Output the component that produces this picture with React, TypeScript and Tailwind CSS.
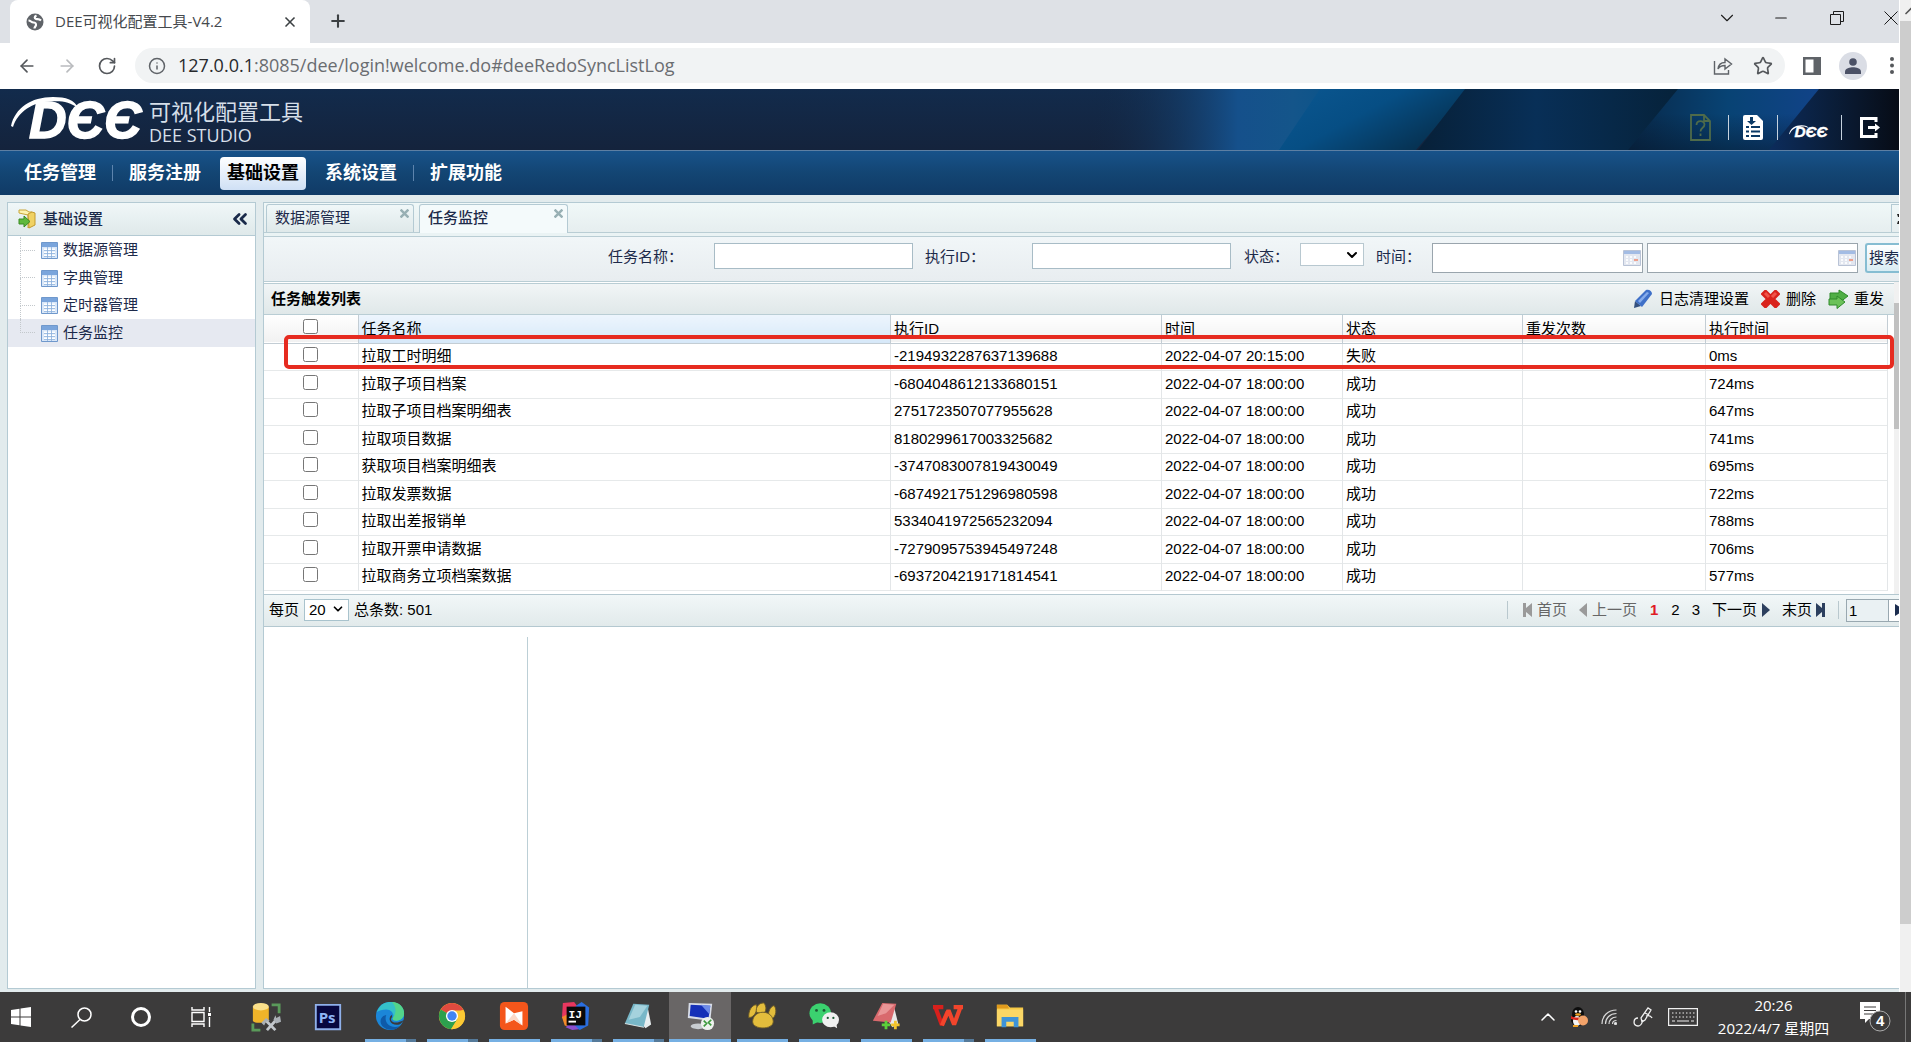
import React from "react";
import {
  ArrowLeft,
  ArrowRight,
  RotateCw,
  Info,
  Star,
  X,
  Plus,
  ChevronDown,
  ChevronUp,
  ChevronsLeft,
  Minus,
} from "lucide-react";

const NAV = ["任务管理", "服务注册", "基础设置", "系统设置", "扩展功能"];
const TREE = ["数据源管理", "字典管理", "定时器管理", "任务监控"];

const ROWS = [
  ["拉取工时明细", "-2194932287637139688", "2022-04-07 20:15:00", "失败", "0ms"],
  ["拉取子项目档案", "-6804048612133680151", "2022-04-07 18:00:00", "成功", "724ms"],
  ["拉取子项目档案明细表", "2751723507077955628", "2022-04-07 18:00:00", "成功", "647ms"],
  ["拉取项目数据", "8180299617003325682", "2022-04-07 18:00:00", "成功", "741ms"],
  ["获取项目档案明细表", "-3747083007819430049", "2022-04-07 18:00:00", "成功", "695ms"],
  ["拉取发票数据", "-6874921751296980598", "2022-04-07 18:00:00", "成功", "722ms"],
  ["拉取出差报销单", "5334041972565232094", "2022-04-07 18:00:00", "成功", "788ms"],
  ["拉取开票申请数据", "-7279095753945497248", "2022-04-07 18:00:00", "成功", "706ms"],
  ["拉取商务立项档案数据", "-6937204219171814541", "2022-04-07 18:00:00", "成功", "577ms"],
];

const UI = "font-['Liberation_Sans','Noto_Sans_CJK_SC',sans-serif]";
const SEGOE = "font-['Open_Sans','Noto_Sans_CJK_SC',sans-serif]";

/* ---------- browser chrome ---------- */

function Globe() {
  return (
    <svg viewBox="0 0 18 18" className="h-[18px] w-[18px]">
      <circle cx="9" cy="9" r="8.500" fill="#5f6368" />
      <path
        d="M2.500 7.500C5 7.500 5 9.500 7.500 9.500s2.500 1 2.500 2.500-1.500 1.500-1.500 3.500M10.500 2.500C8 3.500 8.500 5.500 10 6s3-.5 5 1.500"
        fill="none"
        stroke="#fff"
        strokeWidth="2.200"
      />
    </svg>
  );
}

function TabStrip() {
  return (
    <div className={`flex h-[43px] shrink-0 items-end bg-[#dee1e6] pl-[10px] ${SEGOE}`}>
      <div className="flex h-[43px] w-[300px] items-center rounded-t-lg bg-white pr-3 pl-4">
        <Globe />
        <span className="ml-[11px] grow text-[15px] whitespace-nowrap text-[#45494d]">
          DEE可视化配置工具-V4.2
        </span>
        <button aria-label="关闭标签页">
          <X className="h-4 w-4 text-[#3c4043]" strokeWidth={2.5} />
        </button>
      </div>
      <button aria-label="新标签页" className="mb-3 ml-[18px]">
        <Plus className="h-5 w-5 text-[#3c4043]" strokeWidth={2.5} />
      </button>
      <div className="grow" />
      <div className="flex h-[36px] items-center gap-10 self-start text-[#1c1c1c]">
        <button aria-label="搜索标签页">
          <ChevronDown className="h-[22px] w-[22px]" strokeWidth={1.2} />
        </button>
        <button aria-label="最小化" className="-ml-[6px]">
          <Minus className="h-[18px] w-[18px]" strokeWidth={1.6} />
        </button>
        <button aria-label="还原">
          <svg viewBox="0 0 14 14" className="h-[14px] w-[14px]" fill="none" stroke="currentColor">
            <path d="M.5 3.500h10v10h-10zM3.500 3.500v-3h10v10h-3" />
          </svg>
        </button>
        <button aria-label="关闭" className="mr-[1px]">
          <svg viewBox="0 0 14 14" className="h-[14px] w-[14px]" stroke="currentColor">
            <path d="M.5.5l13 13M13.500.5l-13 13" />
          </svg>
        </button>
      </div>
    </div>
  );
}

function Toolbar() {
  return (
    <div className={`flex h-[46px] shrink-0 items-center bg-white pb-[1px] pl-[17px] ${SEGOE}`}>
      <button aria-label="后退">
        <ArrowLeft className="h-5 w-5 text-[#55585c]" />
      </button>
      <button aria-label="前进" className="ml-5">
        <ArrowRight className="h-5 w-5 text-[#b9bbbe]" />
      </button>
      <button aria-label="刷新" className="ml-5">
        <RotateCw className="h-5 w-5 text-[#55585c]" />
      </button>
      <div className="ml-[18px] flex h-[35px] grow items-center rounded-full bg-[#f1f3f4] pr-3 pl-[13px]">
        <Info className="h-[18px] w-[18px] shrink-0 text-[#5f6368]" />
        <div className="ml-3 grow text-[18px] whitespace-nowrap text-[#6a6d71]">
          <span className="text-[#27292c]">127.0.0.1</span>:8085/dee/login!welcome.do#deeRedoSyncListLog
        </div>
        <button aria-label="分享">
          <svg viewBox="0 0 20 20" className="h-5 w-5" fill="none" stroke="#5f6368" strokeWidth="1.4">
            <path d="M1.500 5v13h14v-4M5 13c.5-4.500 3-6.500 7-6.500V3l6.500 5-6.500 5V9.500c-3 0-5.500.800-7 3.500z" />
          </svg>
        </button>
        <button aria-label="收藏" className="ml-5">
          <Star className="h-5 w-5 text-[#55585c]" />
        </button>
      </div>
      <button aria-label="侧边栏" className="ml-[18px]">
        <svg viewBox="0 0 18 18" className="h-[18px] w-[18px]">
          <path d="M0 0h18v18H0zM2.500 2.500v13h8v-13z" fill="#5f6368" fillRule="evenodd" />
        </svg>
      </button>
      <button
        aria-label="用户"
        className="ml-[18px] flex h-7 w-7 items-center justify-center rounded-full bg-[#dadde5]"
      >
        <svg viewBox="0 0 16 16" className="h-4 w-4" fill="#4b5166">
          <circle cx="8" cy="4" r="3.800" />
          <path d="M0 16v-2.500C0 10.500 5 9.300 8 9.300s8 1.200 8 4.200V16z" />
        </svg>
      </button>
      <button aria-label="菜单" className="mr-[5px] ml-[23px]">
        <svg viewBox="0 0 4 17" className="h-[17px] w-1" fill="#55585c">
          <circle cx="2" cy="2" r="2" />
          <circle cx="2" cy="8.500" r="2" />
          <circle cx="2" cy="15" r="2" />
        </svg>
      </button>
    </div>
  );
}

/* ---------- application header ---------- */

function DeeLogo({ className }: { className: string }) {
  return (
    <svg viewBox="0 0 138 61" className={className} fill="#fff">
      <path d="M0 37C4 19 20 8 42 8c13 0 22 3 25 11-8-6-17-7.500-27-6.500C21 13 7 23 2 38z" />
      <text
        x="18"
        y="49"
        fontSize="52"
        fontFamily="'Liberation Sans', Arial, sans-serif"
        fontStyle="italic"
        fontWeight="700"
        stroke="#fff"
        strokeWidth="1.500"
      >
        DЄЄ
      </text>
    </svg>
  );
}

function HeaderArt() {
  return (
    <svg
      viewBox="0 0 860 61"
      preserveAspectRatio="none"
      className="absolute top-0 right-0 h-full w-[860px]"
    >
      <defs>
        <linearGradient id="a">
          <stop offset="0" stopColor="#132743" stopOpacity="0" />
          <stop offset="0.620" stopColor="#15508b" />
          <stop offset="0.850" stopColor="#14558a" />
          <stop offset="1" stopColor="#0c548a" />
        </linearGradient>
        <linearGradient id="b" x1="0" y1="0" x2="1" y2="0.600">
          <stop offset="0" stopColor="#0b5791" />
          <stop offset="0.500" stopColor="#064e84" />
          <stop offset="1" stopColor="#06304f" />
        </linearGradient>
        <linearGradient id="c">
          <stop offset="0" stopColor="#072038" />
          <stop offset="0.450" stopColor="#082f57" />
          <stop offset="1" stopColor="#06223a" />
        </linearGradient>
        <linearGradient id="d">
          <stop offset="0" stopColor="#08294a" />
          <stop offset="0.500" stopColor="#084374" />
          <stop offset="1" stopColor="#12438a" />
        </linearGradient>
        <linearGradient id="e">
          <stop offset="0" stopColor="#0c2c5c" />
          <stop offset="0.500" stopColor="#0a1d38" />
          <stop offset="1" stopColor="#070c16" />
        </linearGradient>
        <linearGradient id="f" x1="0" y1="0" x2="0" y2="1">
          <stop offset="0.400" stopColor="#06162a" stopOpacity="0" />
          <stop offset="1" stopColor="#06162a" stopOpacity="0.500" />
        </linearGradient>
      </defs>
      <path d="M50 0h240v61H50z" fill="url(#a)" />
      <path d="M281 0h148l-52 61H240z" fill="url(#b)" />
      <path d="M426 0h215l-50 61H379z" fill="url(#c)" />
      <path d="M639 0h150l-50 61H589z" fill="url(#d)" />
      <path d="M639 0h221v61H589z" fill="url(#f)" />
      <path d="M780 0h80v61H730z" fill="url(#e)" />
    </svg>
  );
}

function AppHeader() {
  return (
    <header className="relative flex h-[61px] shrink-0 items-start overflow-hidden bg-linear-to-b from-[#122b4c] to-[#14233c]">
      <HeaderArt />
      <DeeLogo className="relative ml-[11px] h-[61px] w-[138px]" />
      <div className={`relative mt-2 text-[#d6dfe9] ${SEGOE}`}>
        <div className="text-[22px] leading-7">可视化配置工具</div>
        <div className="text-[18px] leading-5">DEE STUDIO</div>
      </div>
      <div className="grow" />
      <div className="relative mt-[25px] mr-[19px] flex items-center">
        <button aria-label="帮助">
          <svg viewBox="0 0 21 27" className="h-[27px] w-[21px]" fill="none" stroke="#4f6b4a" strokeWidth="1.800">
            <path d="M1 1h13l6 6v19H1zM14 1v6h6" />
            <path d="M6.500 11c0-5 8-5 8-.5 0 3.500-4 3-4 7M10.500 19.500v2.500" />
          </svg>
        </button>
        <span className="ml-[17px] h-[25px] w-[1px] bg-[#c6d2de]" />
        <button aria-label="日志" className="ml-[14px]">
          <svg viewBox="0 0 20 25" className="h-[25px] w-5">
            <path d="M2 0h12l6 6v17a2 2 0 0 1-2 2H2a2 2 0 0 1-2-2V2a2 2 0 0 1 2-2z" fill="#fff" />
            <path d="M7 2h3v4h3l-4.500 4L4 6h3zM3 11h3v2H3zm5 0h9v2H8zM3 15.500h3v2H3zm5 0h9v2H8zM3 20h3v2H3zm5 0h9v2H8z" fill="#0b3a66" />
          </svg>
        </button>
        <span className="ml-[14px] h-[25px] w-[1px] bg-[#c6d2de]" />
        <DeeLogo className="mt-2 ml-[11px] h-[18px] w-[41px]" />
        <span className="ml-[11px] h-[25px] w-[1px] bg-[#c6d2de]" />
        <button aria-label="退出" className="ml-[18px]">
          <svg viewBox="0 0 20 21" className="h-[21px] w-5" fill="none" stroke="#fff" strokeWidth="3">
            <path d="M16 5V1.500H1.500v18H16V16" />
            <path d="M8 10.500h7" />
            <path d="M15 6.500l5 4-5 4z" fill="#fff" stroke="none" />
          </svg>
        </button>
      </div>
    </header>
  );
}

function NavBar() {
  return (
    <nav
      className={`flex h-[45px] shrink-0 items-center border-t border-[#5d7fa3] bg-linear-to-b from-[#17528a] via-[#134573] via-50% to-[#103a66] pl-4 text-[18px] font-bold text-white ${UI}`}
    >
      {NAV.map((n, i) => (
        <React.Fragment key={n}>
          <a
            href="#"
            className={
              i === 2
                ? "mx-1 rounded-[4px] bg-linear-to-b from-white to-[#cfe0f5] px-[7px] text-black leading-[33px]"
                : "px-2 leading-[33px]"
            }
          >
            {n}
          </a>
          {(i === 0 || i === 3) && <span className="mx-[8px] h-4 w-[1px] bg-[#5d84ad]" />}
          {(i === 1 || i === 2) && <span className="w-[7px]" />}
        </React.Fragment>
      ))}
    </nav>
  );
}

/* ---------- sidebar ---------- */

function TableIcon() {
  return (
    <svg viewBox="0 0 17 17" className="h-[17px] w-[17px] shrink-0">
      <path d="M.5.5h16v16H.5z" fill="#d9e7f8" stroke="#6f98cc" />
      <path d="M1 1h15v4H1z" fill="#7aa5dc" />
      <path d="M3 6.500h3v2H3zm4 0h3v2H7zm4 0h3v2h-3zM3 9.500h3v2H3zm4 0h3v2H7zm4 0h3v2h-3zM3 12.500h3v2H3zm4 0h3v2H7zm4 0h3v2h-3z" fill="#fff" />
      <path d="M3 8.500h11M3 11.500h11M3 14.500h11M6.500 5v11M10.500 5v11" stroke="#8db1dc" strokeWidth=".800" />
    </svg>
  );
}

function FolderIcon() {
  return (
    <svg viewBox="0 0 18 20" className="h-5 w-[18px]">
      <path d="M1 1h7l3 2h3v13l-4 3V6L1 4z" fill="#fdf3b0" stroke="#c9a63a" />
      <path d="M10 5l4-2 3 1v12l-6 3z" fill="#f0d264" stroke="#c29a2e" />
      <path d="M1 10h5V7l6 5.500-6 5.500v-3H1z" fill="#5fb83c" stroke="#3b8b22" />
    </svg>
  );
}

function Sidebar() {
  return (
    <aside className="flex w-[249px] shrink-0 flex-col border border-[#b4cad3] bg-white text-[15px] text-[#1d2a4a]">
      <div className="flex h-[33px] items-center border-b border-[#b4cad3] bg-linear-to-b from-[#f0f7f8] to-[#dfe9ea] pr-1 pl-[10px] text-[#1a2a4a]">
        <FolderIcon />
        <span className="ml-[7px] grow font-medium">基础设置</span>
        <button aria-label="折叠">
          <ChevronsLeft className="h-[22px] w-[22px]" strokeWidth={3} />
        </button>
      </div>
      <ul className="pt-[1px]">
        {TREE.map((t, i) => (
          <li key={t} className={`flex items-center ${i === 3 ? "bg-[#e6e9f1]" : ""} ${i % 2 ? "h-[28px]" : "h-[27px]"}`}>
            <span className="flex h-full w-[27px] shrink-0 flex-col pl-3">
              <span className="h-1/2 border-b border-l border-dotted border-[#c3c8cc]" />
              <span className={i === 3 ? "h-1/2" : "h-1/2 border-l border-dotted border-[#c3c8cc]"} />
            </span>
            <a href="#" className="ml-[6px] flex items-center gap-[5px]">
              <TableIcon />
              {t}
            </a>
          </li>
        ))}
      </ul>
    </aside>
  );
}

/* ---------- main panel ---------- */

function CloseMark() {
  return (
    <svg viewBox="0 0 8 8" className="h-[9px] w-[9px]" stroke="#98b0b4" strokeWidth="2.200">
      <path d="M.5.5l7 7M7.500.5l-7 7" />
    </svg>
  );
}

function Tabs() {
  return (
    <div className="flex h-[34px] shrink-0 flex-col border-b border-[#b9cdd4] bg-[#eaf3f4] text-[15px] text-[#1d2a4a]">
      <div className="flex h-[30px] items-end border-b border-[#b9cdd4] bg-linear-to-b from-[#f0f8f8] to-[#e6eeef] pl-[2px]">
        {["数据源管理", "任务监控"].map((t, i) => (
          <div
            key={t}
            className={
              i
                ? "-mb-[1px] ml-[5px] flex h-[29px] w-[149px] items-start rounded-t-[3px] border border-b-0 border-[#b4cad3] bg-[#f4fafb] pr-1 pl-[8px] font-medium"
                : "flex h-[28px] w-[148px] items-start rounded-t-[3px] border border-b-0 border-[#b4cad3] bg-linear-to-b from-[#f0f7f8] to-[#dfe9ea] pr-1 pl-[8px]"
            }
          >
            <button className="grow text-left leading-[25px]">{t}</button>
            <button aria-label="关闭" className="mt-1">
              <CloseMark />
            </button>
          </div>
        ))}
        <div className="grow" />
        <button aria-label="更多" className="flex h-[28px] w-[8px] items-center justify-end border-t border-l border-[#b4cad3]">
          <svg viewBox="0 0 2 12" className="h-3 w-[2px]" fill="#222">
            <path d="M0 1h2v3H1zM1 8h1v3H0z" />
          </svg>
        </button>
      </div>
    </div>
  );
}

function CalendarIcon() {
  return (
    <svg viewBox="0 0 18 16" className="h-4 w-[18px]">
      <path d="M.5.5h17v15H.5z" fill="#e3e7f0" stroke="#b9c3d6" />
      <path d="M1 1h16v3H1z" fill="#a3bce4" />
      <path d="M3 6h2v2H3zm4 0h2v2H7zm4 0h2v2h-2zM3 9h2v2H3zm4 0h2v2H7zm-4 3h2v2H3zm4 0h2v2H7zm4 0h2v2h-2z" fill="#fafbfd" />
      <path d="M11 9h4v2h-4z" fill="#eda08d" />
    </svg>
  );
}

function DateBox({ label }: { label: string }) {
  return (
    <div className="mr-[4px] flex h-[30px] w-[211px] items-center border border-[#9aa5ad] bg-white pr-[1px]">
      <input type="text" aria-label={label} className="h-full min-w-0 grow outline-none" />
      <button aria-label="选择日期">
        <CalendarIcon />
      </button>
    </div>
  );
}

function SearchBar() {
  return (
    <form className="flex h-[45px] shrink-0 items-start justify-end border-b border-[#b9cdd4] bg-linear-to-b from-[#f1f6f8] to-[#e8edf0] pt-[6px] text-[15px] text-[#1d2a4a]">
      <label htmlFor="name" className="w-[106px] leading-[27px]">
        任务名称：
      </label>
      <input id="name" type="text" className="h-[26px] w-[199px] border border-[#a8bcc6] bg-white" />
      <label htmlFor="exec" className="ml-3 w-[107px] leading-[27px]">
        执行ID：
      </label>
      <input id="exec" type="text" className="h-[26px] w-[199px] border border-[#a8bcc6] bg-white" />
      <label htmlFor="state" className="ml-[13px] w-[56px] leading-[27px]">
        状态：
      </label>
      <span className="relative">
        <select id="state" className="h-[23px] w-[64px] appearance-none border border-[#b8c8d0] bg-white" />
        <ChevronDown className="pointer-events-none absolute top-1 right-[4px] h-4 w-4 text-black" strokeWidth={3} />
      </span>
      <span className="ml-3 w-[56px] leading-[27px]">时间：</span>
      <DateBox label="开始时间" />
      <DateBox label="结束时间" />
      <button
        type="button"
        className="ml-[3px] h-[30px] w-[34px] overflow-hidden rounded-l-[3px] border-2 border-r-0 border-[#86bdd2] bg-linear-to-b from-white to-[#d9ecf3] pl-[2px] text-left whitespace-nowrap"
      >
        搜索
      </button>
    </form>
  );
}

function Actions() {
  return (
    <div className="flex items-center text-black">
      <button className="flex items-center gap-[6px]">
        <svg viewBox="0 0 20 20" className="h-5 w-5">
          <path d="M1 19l1-7 6 5z" fill="#34507f" />
          <path d="M2 12L13 1c3-1 6 1 6 4L9 18z" fill="#3f70c8" />
          <path d="M5 12L14 3l2 1L7 14z" fill="#86aceb" />
        </svg>
        日志清理设置
      </button>
      <button className="ml-3 flex items-center gap-[6px]">
        <svg viewBox="0 0 19 18" className="h-[18px] w-[19px]" stroke="#d9231c" strokeWidth="7" strokeLinecap="butt">
          <path d="M2 1.500l15 15M17 1.500l-15 15" />
          <path d="M4 3l4 4M15 3l-4 4" stroke="#f0554a" strokeWidth="3" />
        </svg>
        删除
      </button>
      <button className="ml-3 flex items-center gap-[5px]">
        <svg viewBox="0 0 21 20" className="h-5 w-[21px]" fill="#4fae45" stroke="#2f8a2b">
          <path d="M2 4h9V1l9 6-9 7v-3H2z" />
          <path d="M1 10h8V7l8 6-8 6.500V16H1z" fill="#6cc25a" />
        </svg>
        重发
      </button>
    </div>
  );
}

const cell = "border-r border-[#e3e6e8] pr-1 pl-[3px]";

function TaskTable() {
  return (
    <div className="relative h-[279px] overflow-hidden pr-[6px]">
      <table className="w-full table-fixed border-collapse text-[15px] text-black">
        <colgroup>
          <col className="w-[94px]" />
          <col />
          <col className="w-[271px]" />
          <col className="w-[181px]" />
          <col className="w-[180px]" />
          <col className="w-[183px]" />
          <col className="w-[182px]" />
        </colgroup>
        <thead>
          <tr className="h-[28px] border-b border-[#c3cdd4] bg-linear-to-b from-[#ffffff] to-[#f1f1f1] text-left">
            <th className="border-r border-[#c3cdd4] p-0 text-center">
              <input type="checkbox" aria-label="全选" className="mx-auto mb-[4px] block h-[15px] w-[15px]" />
            </th>
            {["任务名称", "执行ID", "时间", "状态", "重发次数", "执行时间"].map((h, i) => (
              <th
                key={h}
                className={`border-r border-[#c3cdd4] py-0 pr-1 pl-[3px] leading-[26px] font-normal ${
                  i === 0 ? "bg-linear-to-b from-[#edf5fd] to-[#d6e8f8]" : ""
                }`}
              >
                {h}
              </th>
            ))}
          </tr>
        </thead>
        <tbody>
          {ROWS.map((r, i) => (
            <tr key={r[1]} className={`border-b border-[#e6e9ea] ${i % 2 ? "h-[28px]" : "h-[27px]"}`}>
              <td className="border-r border-[#e3e6e8] p-0">
                <input type="checkbox" aria-label={r[0]} className="mx-auto mb-[4px] block h-[15px] w-[15px]" />
              </td>
              <td className={cell}>{r[0]}</td>
              <td className={cell}>{r[1]}</td>
              <td className={cell}>{r[2]}</td>
              <td className={cell}>{r[3]}</td>
              <td className={cell} />
              <td className={cell}>{r[4]}</td>
            </tr>
          ))}
        </tbody>
      </table>
      <div className="pointer-events-none absolute top-5 right-0 left-5 h-[34px] rounded-[5px] border-4 border-[#e62b20]" />
    </div>
  );
}

function Pager() {
  return (
    <div className="flex h-[33px] shrink-0 items-center border-y border-[#b4c8d0] bg-linear-to-b from-[#f1f7f8] to-[#e2eaeb] pb-[1px] pl-[5px] text-[15px] text-black">
      <label htmlFor="size">每页</label>
      <span className="relative mx-[5px]">
        <select id="size" className="block h-[22px] w-[45px] appearance-none border border-[#a9c3cd] bg-white pl-[4px] leading-5">
          <option>20</option>
        </select>
        <ChevronDown className="pointer-events-none absolute top-[3px] right-1 h-[14px] w-[14px]" strokeWidth={3} />
      </span>
      <span>总条数: 501</span>
      <div className="grow" />
      <span className="h-[18px] w-[1px] bg-[#b9c8ce]" />
      <button className="ml-[15px] flex items-center gap-[5px] text-[#666]">
        <svg viewBox="0 0 9 14" className="h-[14px] w-[9px]" fill="#9a9a9a">
          <path d="M0 0h3v5l6-5v14L3 9v5H0z" />
        </svg>
        首页
      </button>
      <button className="ml-[12px] flex items-center gap-[5px] text-[#666]">
        <svg viewBox="0 0 8 14" className="h-[14px] w-2" fill="#9a9a9a">
          <path d="M8 0v14L0 7z" />
        </svg>
        上一页
      </button>
      <button className="ml-[13px] font-bold text-[#e01b24]">1</button>
      <button className="ml-[13px]">2</button>
      <button className="ml-[12px]">3</button>
      <button className="ml-[12px] flex items-center gap-[5px]">
        下一页
        <svg viewBox="0 0 8 14" className="h-[14px] w-2" fill="#2c3f5e">
          <path d="M0 0v14l8-7z" />
        </svg>
      </button>
      <button className="ml-[12px] flex items-center gap-[4px]">
        末页
        <svg viewBox="0 0 9 14" className="h-[14px] w-[9px]" fill="#2c3f5e">
          <path d="M9 0H6v5L0 0v14l6-5v5h3z" />
        </svg>
      </button>
      <span className="ml-[13px] h-[18px] w-[1px] bg-[#b9c8ce]" />
      <input
        aria-label="页码"
        defaultValue="1"
        className="ml-[7px] h-[23px] w-[43px] border border-[#99a8b0] bg-[#eaf1f3] px-[2px]"
      />
      <button aria-label="跳转" className="flex h-[23px] w-[10px] items-center justify-end border-y border-[#99a8b0] bg-white">
        <svg viewBox="0 0 4 12" className="h-3 w-1" fill="#1d2e50">
          <path d="M0 0l4 2.500v7L0 12z" />
        </svg>
      </button>
    </div>
  );
}

function MainPanel() {
  return (
    <main className="flex min-w-0 grow flex-col border border-r-0 border-[#b4cad3] bg-white">
      <Tabs />
      <SearchBar />
      <div className="flex h-[312px] shrink-0">
        <div className="min-w-0 grow">
          <div className="mt-[1px] flex h-[32px] items-center justify-between border-y border-[#b9cdd4] bg-linear-to-b from-[#f1f5f6] to-[#e0e8e9] pr-[10px] pl-[7px] text-[15px]">
            <h2 className="font-bold text-black">任务触发列表</h2>
            <Actions />
          </div>
          <TaskTable />
        </div>
        <div className="w-[5px] shrink-0 bg-[#f1f1f1] pt-[21px]">
          <div className="h-[126px] bg-[#c1c1c1]" />
        </div>
      </div>
      <Pager />
      <div className="flex grow pt-[10px]">
        <div className="w-[264px] border-r border-[#bccfd6]" />
      </div>
    </main>
  );
}

/* ---------- taskbar ---------- */

const icons: Record<string, React.ReactNode> = {
  数据库工具: (
    <>
      <path d="M2 5v15c0 3 17 3 17 0V5z" fill="#f0b429" />
      <ellipse cx="10.500" cy="5" rx="8.500" ry="4" fill="#fbe08a" />
      <path d="M22 3h8v9M2 23v7h8" fill="none" stroke="#5a9a5a" strokeWidth="3" />
      <path d="M17 30l9-10M15 19l11 11" fill="none" stroke="#c2c7cc" strokeWidth="3" />
      <path d="M11 22l5-5 4 3-4 1-2 4zM31 15l-4 2-1-3-2 5 3 4 5-2z" fill="#aab0b6" />
    </>
  ),
  Photoshop: (
    <>
      <path d="M3 3h26v26H3z" fill="#07083f" stroke="#8fb0ea" strokeWidth="2" />
      <text x="6" y="22" fontSize="16" fontWeight="700" fontFamily="'Open Sans', sans-serif" fill="#8fb6f5">
        Ps
      </text>
    </>
  ),
  Edge: (
    <>
      <circle cx="16" cy="16" r="15" fill="#1b86d8" />
      <path d="M2 12C5 3 11 1 17 1c9 0 14 6 14 12 0 5-4 8-8 8-3 0-5-1-4-3 2-3-1-9-7-9-4 0-8 1-10 3z" fill="#35c1c8" />
      <path d="M18 1c8 0 13 6 13 12 0 5-4 8-8 8-3 0-5-1-4-3 4-5 4-12-1-17z" fill="#53d58a" />
      <path d="M12 15c-3 8 4 15 14 12-4 5-13 5-18 0-4-5-2-11 4-12z" fill="#0e5aa8" />
      <path d="M18 15c1 2-1 3-1 5 1 4 8 4 14 0-2 3-3 4-5 5-4 1-9 0-10-4-1-3 0-5 2-6z" fill="#3b3a3a" />
    </>
  ),
  Chrome: (
    <>
      <circle cx="16" cy="16" r="14" fill="#fbc02d" />
      <path d="M16 16L4 9a14 14 0 0 1 24 0z" fill="#e04a3f" />
      <path d="M16 16L4 9a14 14 0 0 0 11 21l7-11z" fill="#2da04e" />
      <path d="M16 10h12.500A14 14 0 0 1 15 30l7-11z" fill="#fbc934" />
      <circle cx="16" cy="16" r="6.500" fill="#fff" />
      <circle cx="16" cy="16" r="5" fill="#4285f4" />
    </>
  ),
  会议: (
    <>
      <rect x="1" y="1" width="30" height="30" rx="5" fill="#f4561b" />
      <path d="M7 6l9 7 9-2v15l-9-6-9 4z" fill="#fff" />
      <path d="M7 24l9-11 9 13-9-6z" fill="#fbd9c8" />
    </>
  ),
  IntelliJ: (
    <>
      <path d="M2 2l12-1 6 8-8 14L1 18z" fill="#e8375f" />
      <path d="M1 17l6-3 4 14-7-2z" fill="#f58a2a" />
      <path d="M16 5l6-4 8 6-1 19-9 5-9-6z" fill="#2a6ee0" />
      <path d="M5 28l6-6 8 8-7 1z" fill="#8a4fd0" />
      <path d="M6 6h20v20H6z" fill="#0a0a0a" />
      <text x="8" y="18" fontSize="12" fontWeight="700" fontFamily="'Liberation Mono', monospace" fill="#fff">
        IJ
      </text>
      <path d="M8 21h8v2H8z" fill="#fff" />
    </>
  ),
  记事本: (
    <>
      <path d="M26 5l4 20-6 4-4-6z" fill="#e8eef0" />
      <path d="M11 3l17 1-6 24L2 24z" fill="#78b7c8" />
      <path d="M13 4l13 1-8 12L6 20z" fill="#b8dde6" opacity=".700" />
      <path d="M2 24l20 4 6-4" fill="none" stroke="#dfe9ea" />
    </>
  ),
  远程桌面: (
    <>
      <path d="M4 2l25 1-2 18-24-3z" fill="#d8dde8" />
      <path d="M6 4l21 1-2 14-20-3z" fill="#1530b8" />
      <path d="M17 4l10 1-1 9z" fill="#6d8be8" />
      <ellipse cx="14" cy="27" rx="8" ry="3" fill="#c8ccd0" />
      <circle cx="24" cy="24" r="7" fill="#eef2ee" />
      <path d="M20 21l3 3-3 3M28 20l-3 3 3 3" fill="none" stroke="#3d9a3d" strokeWidth="1.800" />
    </>
  ),
  Navicat: (
    <g fill="#e3bd3c" stroke="#6b5a28" strokeWidth="1">
      <path d="M2 18C1 11 5 4 10 4c2 4-1 11-5 13z" />
      <path d="M10 12c-1-6 3-10 8-10 3 4 3 9-1 12z" />
      <path d="M23 14c0-4 3-9 6-9 3 4 2 11-2 14z" />
      <path d="M17 12c7 0 11 5 11 10 0 9-22 9-22 0 0-5 4-10 11-10z" />
    </g>
  ),
  微信: (
    <>
      <ellipse cx="12" cy="13" rx="11.500" ry="10.500" fill="#3bd16f" />
      <path d="M4 19l0 6 6-3z" fill="#3bd16f" />
      <ellipse cx="23" cy="20" rx="9" ry="8" fill="#f0f0f0" />
      <path d="M25 26l5 3-1-6z" fill="#f0f0f0" />
      <g fill="#1c5a34">
        <circle cx="8" cy="10" r="1.500" />
        <circle cx="16" cy="10" r="1.500" />
        <circle cx="20" cy="18" r="1.200" />
        <circle cx="26" cy="18" r="1.200" />
      </g>
    </>
  ),
  文本编辑器: (
    <>
      <path d="M24 4l5 20-6 4-4-6z" fill="#e8e8e8" />
      <path d="M12 2l15 1-6 20L2 21z" fill="#d9696d" />
      <path d="M13 3l12 1-9 9-9 3z" fill="#f0a8a8" opacity=".700" />
      <path d="M16 21v9M11.500 25.500h9" stroke="#5ccf3a" strokeWidth="3" />
      <path d="M26 21v9M21.500 25.500h9" stroke="#f2c32c" strokeWidth="3" />
    </>
  ),
  WPS: (
    <g fill="none" strokeWidth="4.500" strokeLinejoin="bevel">
      <path d="M0 6.500h11M2.500 6.500l7 19 6-14" stroke="#d8201c" />
      <path d="M9.500 26l7-16 6 15 7-19M22 6.500h10" stroke="#f2452c" />
    </g>
  ),
  资源管理器: (
    <>
      <path d="M2 4h11l3 3h14v20H2z" fill="#f6c945" />
      <path d="M2 4h11l2 4H2z" fill="#e09a1c" />
      <path d="M2 9h28v18H2z" fill="#fbd766" />
      <path d="M7 28v-11h18v11h-5v-6h-8v6z" fill="#3f94d8" />
    </>
  ),
};

function Taskbar() {
  return (
    <footer className={`flex h-[50px] shrink-0 items-stretch bg-[#3c3b3b] text-white ${SEGOE}`}>
      <button aria-label="开始" className="mr-[9px] flex w-[42px] items-center justify-center">
        <svg viewBox="0 0 20 20" className="h-5 w-5" fill="#fff">
          <path d="M0 3l8.500-1.200v7.700H0zM9.500 1.600L20 0v9.500H9.500zM0 10.500h8.500v7.700L0 17zM9.500 10.500H20V20l-10.500-1.500z" />
        </svg>
      </button>
      <button aria-label="搜索" className="flex w-[60px] items-center justify-center">
        <svg viewBox="0 0 21 21" className="h-[21px] w-[21px]" fill="none" stroke="#fff" strokeWidth="1.500">
          <circle cx="13.500" cy="7.500" r="6.500" />
          <path d="M9 12.500L.500 20.500" />
        </svg>
      </button>
      <button aria-label="Cortana" className="flex w-[60px] items-center justify-center">
        <span className="h-5 w-5 rounded-full border-[3px] border-white" />
      </button>
      <button aria-label="任务视图" className="mr-1 flex w-[60px] items-center justify-center">
        <svg viewBox="0 0 21 20" className="h-5 w-[21px]" fill="none" stroke="#fff" strokeWidth="1.400">
          <path d="M1 0v3h12V0M1 5.500h12v9H1zM1 20v-3h12v3M18.500 0v5M18.500 10v10" />
          <path d="M17 6h3v3h-3z" fill="#fff" stroke="none" />
        </svg>
      </button>
      {Object.entries(icons).map(([name, art], i) => (
        <button
          key={name}
          aria-label={name}
          className={`flex w-[62px] flex-col items-center ${i === 7 ? "bg-[#696666]" : ""}`}
        >
          <span className="flex grow items-center">
            <svg viewBox="0 0 32 32" className="h-[30px] w-[30px]">
              {art}
            </svg>
          </span>
          {i > 1 && (
            <span className={`flex h-[3px] bg-[#76b0e3] ${i === 7 ? "w-full" : "w-[51px]"}`}>
              {[2, 3, 5, 6, 11].includes(i) && <span className="ml-auto w-[10px] bg-[#557a9a]" />}
            </span>
          )}
        </button>
      ))}
      <div className="grow" />
      <button aria-label="显示隐藏的图标">
        <ChevronUp className="h-6 w-6" strokeWidth={1.5} />
      </button>
      <button aria-label="QQ" className="ml-[10px]">
        <svg viewBox="0 0 18 20" className="h-5 w-[18px]">
          <ellipse cx="8" cy="7" rx="6" ry="7" fill="#0d0d0d" />
          <ellipse cx="8" cy="13" rx="7" ry="6" fill="#0d0d0d" />
          <ellipse cx="7" cy="14" rx="4" ry="5" fill="#f4f4f4" />
          <path d="M1 9c4 2 9 2 13 0v3c-4 1.500-9 1.500-13 0z" fill="#d9261c" />
          <circle cx="6" cy="4.500" r="1.300" fill="#fff" />
          <circle cx="10" cy="4.500" r="1.300" fill="#fff" />
          <ellipse cx="8" cy="7.500" rx="3" ry="1.200" fill="#f0a020" />
          <circle cx="13" cy="13.500" r="5" fill="#f3a36a" />
          <path d="M3 19h5" stroke="#f0a020" strokeWidth="2" />
        </svg>
      </button>
      <button aria-label="网络" className="ml-[13px]">
        <svg viewBox="0 0 16 16" className="h-4 w-4" fill="none" stroke="#d9d9d9" strokeWidth="1.200">
          <path d="M1 15C1 7 7 1 15.500 1M4.500 15C4.500 9 9 4.500 15.500 4.500M8 15c0-4 3-7 7.500-7M11.500 15c0-2 1.500-3.500 4-3.500" />
          <circle cx="14.500" cy="14.500" r="1" fill="#fff" />
        </svg>
      </button>
      <button aria-label="手写笔" className="ml-4">
        <svg viewBox="0 0 20 20" className="h-5 w-5" fill="none" stroke="#f0f0f0" strokeWidth="1.300">
          <path d="M5 11C0 11-.500 19 5 19c4 0 4-4 5-6M9 15l-1-4 7-10 3 2-6 10zM13 9c3-1 5 0 6 2M12 6l4 2" />
        </svg>
      </button>
      <button aria-label="触摸键盘" className="ml-[15px]">
        <svg viewBox="0 0 30 18" className="h-[18px] w-[30px]" fill="none" stroke="#f0f0f0" strokeWidth="1.200">
          <path d="M.6.6h28.800v16.800H.6z" />
          <path d="M4 5h23M4 9h23" strokeDasharray="1.500 2" />
          <path d="M4 13h3M9 13h12M23 13h3" />
        </svg>
      </button>
      <div className="ml-[18px] w-[115px] pt-[2px] text-center text-[15px] leading-[23px] whitespace-nowrap">
        <div>20:26</div>
        <div>2022/4/7 星期四</div>
      </div>
      <button aria-label="通知" className="ml-[29px]">
        <svg viewBox="0 0 31 30" className="h-[30px] w-[31px]">
          <path d="M0 0h20v17H9l-4 4v-4H0z" fill="#fff" />
          <path d="M4 5h12M4 8.500h12M4 12h12" stroke="#3c3b3b" strokeWidth="1.200" />
          <circle cx="20" cy="19" r="10" fill="#3c3b3b" stroke="#aaa" />
          <text x="16" y="24" fontSize="15" fontWeight="700" fontFamily="'Liberation Sans', sans-serif" fill="#fff">
            4
          </text>
        </svg>
      </button>
      <span className="mr-[5px] ml-[14px] w-[1px] bg-[#777]" />
    </footer>
  );
}

export default function App() {
  return (
    <div className={`flex h-screen flex-col overflow-hidden ${UI}`}>
      <div className="flex min-h-0 grow">
        <div className="flex min-w-0 grow flex-col">
          <TabStrip />
          <Toolbar />
          <AppHeader />
          <NavBar />
          <div className="flex min-h-0 grow gap-[7px] bg-[#e2ebed] pt-[7px] pb-[3px] pl-[7px]">
            <Sidebar />
            <MainPanel />
          </div>
        </div>
        <div className="w-3 shrink-0 border-l border-white bg-[#f0f0f0]">
          <button aria-label="向上滚动" className="block h-[21px] w-full overflow-hidden">
            <ChevronUp className="ml-[1px] h-5 w-5 text-[#555]" />
          </button>
          <div className="h-[903px] bg-[#cdcdcd]" />
        </div>
      </div>
      <Taskbar />
    </div>
  );
}
